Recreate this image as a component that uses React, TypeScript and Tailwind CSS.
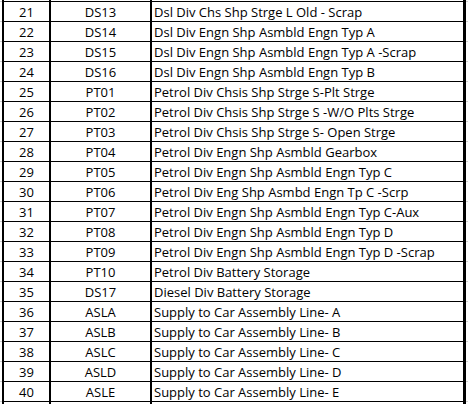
import React from "react";

const rows: [string, string, string][] = [
  ["21", "DS13", "Dsl Div Chs Shp Strge L Old - Scrap"],
  ["22", "DS14", "Dsl Div Engn Shp Asmbld Engn Typ A"],
  ["23", "DS15", "Dsl Div Engn Shp Asmbld Engn Typ A -Scrap"],
  ["24", "DS16", "Dsl Div Engn Shp Asmbld Engn Typ B"],
  ["25", "PT01", "Petrol Div Chsis Shp Strge S-Plt Strge"],
  ["26", "PT02", "Petrol Div Chsis Shp Strge S -W/O Plts Strge"],
  ["27", "PT03", "Petrol Div Chsis Shp Strge S- Open Strge"],
  ["28", "PT04", "Petrol Div Engn Shp Asmbld Gearbox"],
  ["29", "PT05", "Petrol Div Engn Shp Asmbld Engn Typ C"],
  ["30", "PT06", "Petrol Div Eng Shp Asmbd Engn Tp C -Scrp"],
  ["31", "PT07", "Petrol Div Engn Shp Asmbld Engn Typ C-Aux"],
  ["32", "PT08", "Petrol Div Engn Shp Asmbld Engn Typ D"],
  ["33", "PT09", "Petrol Div Engn Shp Asmbld Engn Typ D -Scrap"],
  ["34", "PT10", "Petrol Div Battery Storage"],
  ["35", "DS17", "Diesel Div Battery Storage"],
  ["36", "ASLA", "Supply to Car Assembly Line- A"],
  ["37", "ASLB", "Supply to Car Assembly Line- B"],
  ["38", "ASLC", "Supply to Car Assembly Line- C"],
  ["39", "ASLD", "Supply to Car Assembly Line- D"],
  ["40", "ASLE", "Supply to Car Assembly Line- E"],
];

function Row({ r, top }: { r?: [string, string, string]; top: boolean }) {
  const h = r ? "h-[20px]" : top ? "h-[1px]" : "h-[3px]";
  const bt = r || !top ? "border-t" : "";
  return (
    <div className={`flex ${h}`}>
      <div className={`w-[2px] ${bt} border-[#d0d0d0]`} />
      <div className={`flex w-[464px] ${bt} border-black`}>
        <div className="w-[47px] border-l-2 border-black flex items-end justify-center pb-[1px]">
          {r ? r[0] : null}
        </div>
        <div className="w-[101px] border-l-2 border-black flex items-end justify-center pb-[1px]">
          {r ? r[1] : null}
        </div>
        <div className="w-[316px] border-l-2 border-r-[3px] border-black flex items-end pl-[2px] pb-[1px] whitespace-nowrap">
          {r ? r[2] : null}
        </div>
      </div>
      <div className={`w-[2px] ${bt} border-[#d0d0d0]`} />
    </div>
  );
}

export default function App() {
  return (
    <div
      className="w-[468px] h-[404px] bg-white overflow-hidden text-black text-[13px] leading-[16px]"
      style={{ fontFamily: '"Open Sans", "Liberation Sans", sans-serif' }}
    >
      <Row top={true} />
      {rows.map((r) => (
        <Row key={r[0]} r={r} top={false} />
      ))}
      <Row top={false} />
    </div>
  );
}
